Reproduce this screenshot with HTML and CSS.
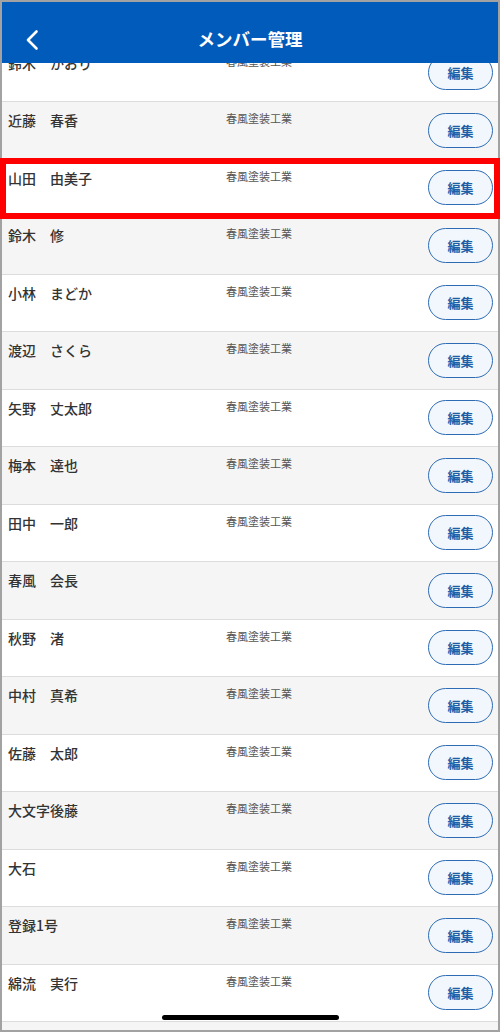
FILE: index.html
```html
<!DOCTYPE html>
<html lang="ja">
<head>
  <meta charset="UTF-8" />
  <meta name="viewport" content="width=device-width, initial-scale=1.0"/>
  <title>メンバー管理</title>
  <link rel="stylesheet" href="styles.css">
</head>
<body>
  <div class="screen">
    <header class="app-bar">
      <button class="back" aria-label="戻る">
        <svg width="16" height="22" viewBox="0 0 16 22">
          <polyline points="12.5,2.5 4,11 12.5,19.5" fill="none" stroke="#fff" stroke-width="2.6" stroke-linecap="round" stroke-linejoin="round"/>
        </svg>
      </button>
      <h1>メンバー管理</h1>
    </header>

    <ul class="member-list">
      <li class="member"><span class="name">鈴木　かおり</span><span class="company">春風塗装工業</span><button class="edit">編集</button></li>
      <li class="member"><span class="name">近藤　春香</span><span class="company">春風塗装工業</span><button class="edit">編集</button></li>
      <li class="member selected"><span class="name">山田　由美子</span><span class="company">春風塗装工業</span><button class="edit">編集</button></li>
      <li class="member"><span class="name">鈴木　修</span><span class="company">春風塗装工業</span><button class="edit">編集</button></li>
      <li class="member"><span class="name">小林　まどか</span><span class="company">春風塗装工業</span><button class="edit">編集</button></li>
      <li class="member"><span class="name">渡辺　さくら</span><span class="company">春風塗装工業</span><button class="edit">編集</button></li>
      <li class="member"><span class="name">矢野　丈太郎</span><span class="company">春風塗装工業</span><button class="edit">編集</button></li>
      <li class="member"><span class="name">梅本　達也</span><span class="company">春風塗装工業</span><button class="edit">編集</button></li>
      <li class="member"><span class="name">田中　一郎</span><span class="company">春風塗装工業</span><button class="edit">編集</button></li>
      <li class="member"><span class="name">春風　会長</span><span class="company"></span><button class="edit">編集</button></li>
      <li class="member"><span class="name">秋野　渚</span><span class="company">春風塗装工業</span><button class="edit">編集</button></li>
      <li class="member"><span class="name">中村　真希</span><span class="company">春風塗装工業</span><button class="edit">編集</button></li>
      <li class="member"><span class="name">佐藤　太郎</span><span class="company">春風塗装工業</span><button class="edit">編集</button></li>
      <li class="member"><span class="name">大文字後藤</span><span class="company">春風塗装工業</span><button class="edit">編集</button></li>
      <li class="member"><span class="name">大石</span><span class="company">春風塗装工業</span><button class="edit">編集</button></li>
      <li class="member"><span class="name">登録1号</span><span class="company">春風塗装工業</span><button class="edit">編集</button></li>
      <li class="member"><span class="name">綿流　実行</span><span class="company">春風塗装工業</span><button class="edit">編集</button></li>
      <li class="member peek"></li>
    </ul>

    <div class="home-indicator"></div>
  </div>
</body>
</html>
```

FILE: styles.css
```css
* { box-sizing: border-box; }

html, body {
  margin: 0;
  height: 100%;
  overflow: hidden;
}

body {
  font-family: "Noto Sans CJK JP", "Noto Sans", sans-serif;
  background: #fff;
  color: #333;
}

.screen {
  position: relative;
  height: 1032px;
  border: 2px solid #a2a2a2;
  background: #fff;
}

/* top bar */
.app-bar {
  position: relative;
  z-index: 2;
  height: 61px;
  padding-top: 12px;
  background: #015bbb;
  display: flex;
  align-items: center;
  justify-content: center;
}

.app-bar h1 {
  margin: 0;
  color: #fff;
  font-size: 17.5px;
  font-weight: 700;
  letter-spacing: 0;
}

.back {
  position: absolute;
  left: 22px;
  top: 27px;
  padding: 0;
  border: none;
  background: none;
  display: flex;
}

/* list */
.member-list {
  list-style: none;
  margin: -18.5px 0 0;
  padding: 0;
}

.member {
  height: 57.5px;
  display: grid;
  grid-template-columns: 218px 1fr auto;
  align-items: start;
  padding: 0 5px 0 6px;
  border-bottom: 1.5px solid #dcdcdc;
  background: #fff;
}

.member:nth-child(even) { background: #f5f5f5; }

.member.peek {
  height: 8px;
  border-bottom: none;
}

.member.selected {
  position: relative;
  z-index: 1;
  outline: 6px solid #ff0000;
  outline-offset: -4px;
}

.name {
  padding-top: 8px;
  font-size: 14px;
  font-weight: 500;
  line-height: 20px;
  color: #333;
  white-space: nowrap;
}

.company {
  padding-top: 8px;
  font-size: 11px;
  line-height: 16px;
  color: #555;
}

.edit {
  align-self: center;
  width: 65px;
  height: 35px;
  padding: 0;
  border: 1.5px solid #2d6cb5;
  border-radius: 18px;
  background: #f2f7fd;
  color: #1f5fa8;
  font-family: inherit;
  font-size: 13px;
  font-weight: 700;
  cursor: pointer;
}

.home-indicator {
  position: absolute;
  left: 160px;
  bottom: 10px;
  width: 177px;
  height: 5px;
  border-radius: 3px;
  background: #000;
}
```
